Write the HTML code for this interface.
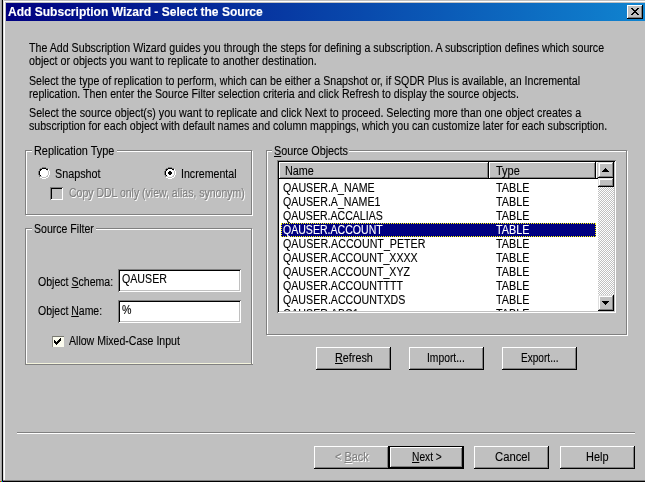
<!DOCTYPE html>
<html><head><meta charset="utf-8"><title>Add Subscription Wizard - Select the Source</title>
<style>
html,body{margin:0;padding:0;}
body{width:645px;height:482px;overflow:hidden;background:#c0c0c0;font-family:"Liberation Sans",sans-serif;font-size:12px;color:#000;position:relative;}
div,span,svg{position:absolute;box-sizing:border-box;}
.t{white-space:nowrap;line-height:13px;height:13px;transform-origin:0 0;-webkit-text-stroke:0.12px currentColor;}
.t u{position:static;text-decoration:underline;text-underline-offset:1px;text-decoration-thickness:1px}
.dis{color:#808080;text-shadow:1px 1px 0 #fff;}
.gb{background:#c0c0c0;height:13px;}
.etg{border:1px solid #808080;}
.etw{border:1px solid #fff;}
.sunk{background:#fff;box-shadow:inset 1px 1px 0 #808080,inset -1px -1px 0 #fff,inset 2px 2px 0 #000,inset -2px -2px 0 #c0c0c0;}
.btn{background:#c0c0c0;box-shadow:inset -1px -1px 0 #000,inset 1px 1px 0 #fff,inset -2px -2px 0 #808080,inset 2px 2px 0 #c0c0c0;}
.def{background:#000;}
.sbtn{background:#c0c0c0;box-shadow:inset -1px -1px 0 #000,inset 1px 1px 0 #dfdfdf,inset -2px -2px 0 #808080,inset 2px 2px 0 #fff;}
.hdr{background:#c0c0c0;box-shadow:inset -1px -1px 0 #000,inset 1px 1px 0 #fff,inset -2px -2px 0 #808080;}
.row{left:281px;width:315px;height:14px;}
.sel{background:#000080;outline:1px dotted #ffff00;outline-offset:-1px;}
.track{background-color:#fff;background-image:conic-gradient(#c0c0c0 25%,#fff 0 50%,#c0c0c0 0 75%,#fff 0);background-size:2px 2px;}
</style></head><body>

<div style="left:1px;top:0;width:1px;height:482px;background:#a0a0a0"></div>
<div style="left:2px;top:0;width:1px;height:482px;background:#000"></div>
<div style="left:3px;top:0;width:1px;height:481px;background:#dcdcdc"></div>
<div style="left:4px;top:1px;width:1px;height:479px;background:#fff"></div>
<div style="left:4px;top:1px;width:641px;height:1px;background:#fff"></div>
<div style="left:3px;top:480px;width:642px;height:1px;background:#808080"></div>
<div style="left:3px;top:481px;width:642px;height:1px;background:#000"></div>
<div style="left:0;top:481px;width:1px;height:1px;background:#f00"></div><div style="left:1px;top:481px;width:1px;height:1px;background:#0f0"></div><div style="left:2px;top:481px;width:1px;height:1px;background:#00f"></div>
<div style="left:6px;top:3px;width:639px;height:18px;background:linear-gradient(90deg,#000080 0%,#1084d0 100%)"></div>
<div class="btn" style="left:627px;top:5px;width:16px;height:14px"></div>
<svg class="px" style="left:631px;top:8px" width="8" height="7" viewBox="0 0 8 7" shape-rendering="crispEdges"><rect x="0" y="0" width="2" height="1" fill="#000"/><rect x="6" y="0" width="2" height="1" fill="#000"/><rect x="1" y="1" width="2" height="1" fill="#000"/><rect x="5" y="1" width="2" height="1" fill="#000"/><rect x="2" y="2" width="4" height="1" fill="#000"/><rect x="3" y="3" width="2" height="1" fill="#000"/><rect x="2" y="4" width="4" height="1" fill="#000"/><rect x="1" y="5" width="2" height="1" fill="#000"/><rect x="5" y="5" width="2" height="1" fill="#000"/><rect x="0" y="6" width="2" height="1" fill="#000"/><rect x="6" y="6" width="2" height="1" fill="#000"/></svg>
<div class="etw" style="left:26px;top:151px;width:227px;height:65px"></div>
<div class="etg" style="left:25px;top:150px;width:227px;height:65px"></div>
<div style="left:26px;top:229px;width:227px;height:135px;border:1px solid #fff;border-bottom-color:#f4f4dc"></div>
<div style="left:25px;top:228px;width:227px;height:136px;border:1px solid #808080;border-bottom:0"></div>
<div style="left:25px;top:364px;width:228px;height:1px;background:#808080"></div>
<div class="etw" style="left:267px;top:151px;width:361px;height:185px"></div>
<div class="etg" style="left:266px;top:150px;width:361px;height:185px"></div>
<div class="gb" style="left:32px;top:145px;width:85px"></div>
<div class="gb" style="left:32px;top:223px;width:64px"></div>
<div class="gb" style="left:272px;top:145px;width:77px"></div>
<svg class="px" style="left:38px;top:167px" width="12" height="12" viewBox="0 0 12 12" shape-rendering="crispEdges"><rect x="4" y="0" width="4" height="1" fill="#808080"/><rect x="2" y="1" width="2" height="1" fill="#808080"/><rect x="4" y="1" width="4" height="1" fill="#000"/><rect x="8" y="1" width="2" height="1" fill="#808080"/><rect x="1" y="2" width="1" height="1" fill="#808080"/><rect x="2" y="2" width="2" height="1" fill="#000"/><rect x="4" y="2" width="4" height="1" fill="#fff"/><rect x="8" y="2" width="2" height="1" fill="#000"/><rect x="10" y="2" width="1" height="1" fill="#fff"/><rect x="1" y="3" width="1" height="1" fill="#808080"/><rect x="2" y="3" width="1" height="1" fill="#000"/><rect x="3" y="3" width="6" height="1" fill="#fff"/><rect x="9" y="3" width="1" height="1" fill="#c0c0c0"/><rect x="10" y="3" width="1" height="1" fill="#fff"/><rect x="0" y="4" width="1" height="1" fill="#808080"/><rect x="1" y="4" width="1" height="1" fill="#000"/><rect x="2" y="4" width="8" height="1" fill="#fff"/><rect x="10" y="4" width="1" height="1" fill="#c0c0c0"/><rect x="11" y="4" width="1" height="1" fill="#fff"/><rect x="0" y="5" width="1" height="1" fill="#808080"/><rect x="1" y="5" width="1" height="1" fill="#000"/><rect x="2" y="5" width="8" height="1" fill="#fff"/><rect x="10" y="5" width="1" height="1" fill="#c0c0c0"/><rect x="11" y="5" width="1" height="1" fill="#fff"/><rect x="0" y="6" width="1" height="1" fill="#808080"/><rect x="1" y="6" width="1" height="1" fill="#000"/><rect x="2" y="6" width="8" height="1" fill="#fff"/><rect x="10" y="6" width="1" height="1" fill="#c0c0c0"/><rect x="11" y="6" width="1" height="1" fill="#fff"/><rect x="0" y="7" width="1" height="1" fill="#808080"/><rect x="1" y="7" width="1" height="1" fill="#000"/><rect x="2" y="7" width="8" height="1" fill="#fff"/><rect x="10" y="7" width="1" height="1" fill="#c0c0c0"/><rect x="11" y="7" width="1" height="1" fill="#fff"/><rect x="1" y="8" width="1" height="1" fill="#808080"/><rect x="2" y="8" width="1" height="1" fill="#000"/><rect x="3" y="8" width="6" height="1" fill="#fff"/><rect x="9" y="8" width="1" height="1" fill="#c0c0c0"/><rect x="10" y="8" width="1" height="1" fill="#fff"/><rect x="1" y="9" width="1" height="1" fill="#808080"/><rect x="2" y="9" width="2" height="1" fill="#c0c0c0"/><rect x="4" y="9" width="4" height="1" fill="#fff"/><rect x="8" y="9" width="2" height="1" fill="#c0c0c0"/><rect x="10" y="9" width="1" height="1" fill="#fff"/><rect x="2" y="10" width="2" height="1" fill="#fff"/><rect x="4" y="10" width="4" height="1" fill="#c0c0c0"/><rect x="8" y="10" width="2" height="1" fill="#fff"/><rect x="4" y="11" width="4" height="1" fill="#fff"/></svg>
<svg class="px" style="left:164px;top:167px" width="12" height="12" viewBox="0 0 12 12" shape-rendering="crispEdges"><rect x="4" y="0" width="4" height="1" fill="#808080"/><rect x="2" y="1" width="2" height="1" fill="#808080"/><rect x="4" y="1" width="4" height="1" fill="#000"/><rect x="8" y="1" width="2" height="1" fill="#808080"/><rect x="1" y="2" width="1" height="1" fill="#808080"/><rect x="2" y="2" width="2" height="1" fill="#000"/><rect x="4" y="2" width="4" height="1" fill="#fff"/><rect x="8" y="2" width="2" height="1" fill="#000"/><rect x="10" y="2" width="1" height="1" fill="#fff"/><rect x="1" y="3" width="1" height="1" fill="#808080"/><rect x="2" y="3" width="1" height="1" fill="#000"/><rect x="3" y="3" width="6" height="1" fill="#fff"/><rect x="9" y="3" width="1" height="1" fill="#c0c0c0"/><rect x="10" y="3" width="1" height="1" fill="#fff"/><rect x="0" y="4" width="1" height="1" fill="#808080"/><rect x="1" y="4" width="1" height="1" fill="#000"/><rect x="2" y="4" width="3" height="1" fill="#fff"/><rect x="5" y="4" width="2" height="1" fill="#000"/><rect x="7" y="4" width="3" height="1" fill="#fff"/><rect x="10" y="4" width="1" height="1" fill="#c0c0c0"/><rect x="11" y="4" width="1" height="1" fill="#fff"/><rect x="0" y="5" width="1" height="1" fill="#808080"/><rect x="1" y="5" width="1" height="1" fill="#000"/><rect x="2" y="5" width="2" height="1" fill="#fff"/><rect x="4" y="5" width="4" height="1" fill="#000"/><rect x="8" y="5" width="2" height="1" fill="#fff"/><rect x="10" y="5" width="1" height="1" fill="#c0c0c0"/><rect x="11" y="5" width="1" height="1" fill="#fff"/><rect x="0" y="6" width="1" height="1" fill="#808080"/><rect x="1" y="6" width="1" height="1" fill="#000"/><rect x="2" y="6" width="2" height="1" fill="#fff"/><rect x="4" y="6" width="4" height="1" fill="#000"/><rect x="8" y="6" width="2" height="1" fill="#fff"/><rect x="10" y="6" width="1" height="1" fill="#c0c0c0"/><rect x="11" y="6" width="1" height="1" fill="#fff"/><rect x="0" y="7" width="1" height="1" fill="#808080"/><rect x="1" y="7" width="1" height="1" fill="#000"/><rect x="2" y="7" width="3" height="1" fill="#fff"/><rect x="5" y="7" width="2" height="1" fill="#000"/><rect x="7" y="7" width="3" height="1" fill="#fff"/><rect x="10" y="7" width="1" height="1" fill="#c0c0c0"/><rect x="11" y="7" width="1" height="1" fill="#fff"/><rect x="1" y="8" width="1" height="1" fill="#808080"/><rect x="2" y="8" width="1" height="1" fill="#000"/><rect x="3" y="8" width="6" height="1" fill="#fff"/><rect x="9" y="8" width="1" height="1" fill="#c0c0c0"/><rect x="10" y="8" width="1" height="1" fill="#fff"/><rect x="1" y="9" width="1" height="1" fill="#808080"/><rect x="2" y="9" width="2" height="1" fill="#c0c0c0"/><rect x="4" y="9" width="4" height="1" fill="#fff"/><rect x="8" y="9" width="2" height="1" fill="#c0c0c0"/><rect x="10" y="9" width="1" height="1" fill="#fff"/><rect x="2" y="10" width="2" height="1" fill="#fff"/><rect x="4" y="10" width="4" height="1" fill="#c0c0c0"/><rect x="8" y="10" width="2" height="1" fill="#fff"/><rect x="4" y="11" width="4" height="1" fill="#fff"/></svg>
<div class="sunk" style="left:50px;top:187px;width:13px;height:13px;background:#c0c0c0"></div>
<div style="left:52px;top:336px;width:12px;height:11px;background:#fbfbee;border-top:1px solid #77776f;border-left:1px solid #8c8c84"></div>
<svg class="px" style="left:54px;top:338px" width="7" height="7" viewBox="0 0 7 7" shape-rendering="crispEdges"><rect x="6" y="0" width="1" height="1" fill="#000"/><rect x="5" y="1" width="2" height="1" fill="#000"/><rect x="0" y="2" width="1" height="1" fill="#000"/><rect x="4" y="2" width="3" height="1" fill="#000"/><rect x="0" y="3" width="2" height="1" fill="#000"/><rect x="3" y="3" width="3" height="1" fill="#000"/><rect x="0" y="4" width="5" height="1" fill="#000"/><rect x="1" y="5" width="3" height="1" fill="#000"/><rect x="2" y="6" width="1" height="1" fill="#000"/></svg>
<div class="sunk" style="left:118px;top:269px;width:123px;height:23px"></div>
<div class="sunk" style="left:118px;top:300px;width:123px;height:23px"></div>
<div class="sunk" style="left:277px;top:160px;width:339px;height:153px"></div>
<div class="hdr" style="left:279px;top:162px;width:210px;height:17px"></div>
<div class="hdr" style="left:489px;top:162px;width:107px;height:17px"></div>
<div class="hdr" style="left:596px;top:162px;width:4px;height:17px"></div>
<div class="track" style="left:598px;top:162px;width:16px;height:149px"></div>
<div class="sbtn" style="left:598px;top:162px;width:16px;height:16px"></div>
<svg class="px" style="left:602px;top:168px" width="7" height="4" viewBox="0 0 7 4" shape-rendering="crispEdges"><rect x="3" y="0" width="1" height="1" fill="#000"/><rect x="2" y="1" width="3" height="1" fill="#000"/><rect x="1" y="2" width="5" height="1" fill="#000"/><rect x="0" y="3" width="7" height="1" fill="#000"/></svg>
<div class="sbtn" style="left:598px;top:178px;width:16px;height:9px"></div>
<div class="sbtn" style="left:598px;top:295px;width:16px;height:16px"></div>
<svg class="px" style="left:602px;top:301px" width="7" height="4" viewBox="0 0 7 4" shape-rendering="crispEdges"><rect x="0" y="0" width="7" height="1" fill="#000"/><rect x="1" y="1" width="5" height="1" fill="#000"/><rect x="2" y="2" width="3" height="1" fill="#000"/><rect x="3" y="3" width="1" height="1" fill="#000"/></svg>
<div style="left:279px;top:179px;width:319px;height:132px;overflow:hidden">
<div class="row" style="left:2px;top:2px"></div>
<span class="t" id="rw0" style="left:4.4px;top:3px;transform:scaleX(0.8874)">QAUSER.A_NAME</span>
<span class="t" id="rt0" style="left:216.6px;top:3px;transform:scaleX(0.8973)">TABLE</span>
<div class="row" style="left:2px;top:16px"></div>
<span class="t" id="rw1" style="left:4.4px;top:17px;transform:scaleX(0.8855)">QAUSER.A_NAME1</span>
<span class="t" id="rt1" style="left:216.6px;top:17px;transform:scaleX(0.8973)">TABLE</span>
<div class="row" style="left:2px;top:30px"></div>
<span class="t" id="rw2" style="left:4.4px;top:31px;transform:scaleX(0.8796)">QAUSER.ACCALIAS</span>
<span class="t" id="rt2" style="left:216.6px;top:31px;transform:scaleX(0.8973)">TABLE</span>
<div class="row sel" style="left:2px;top:44px"></div>
<span class="t" id="rw3" style="left:4.4px;top:45px;color:#fff;transform:scaleX(0.8796)">QAUSER.ACCOUNT</span>
<span class="t" id="rt3" style="left:216.6px;top:45px;color:#fff;transform:scaleX(0.8973)">TABLE</span>
<div class="row" style="left:2px;top:58px"></div>
<span class="t" id="rw4" style="left:4.4px;top:59px;transform:scaleX(0.89)">QAUSER.ACCOUNT_PETER</span>
<span class="t" id="rt4" style="left:216.6px;top:59px;transform:scaleX(0.8973)">TABLE</span>
<div class="row" style="left:2px;top:72px"></div>
<span class="t" id="rw5" style="left:4.4px;top:73px;transform:scaleX(0.886)">QAUSER.ACCOUNT_XXXX</span>
<span class="t" id="rt5" style="left:216.6px;top:73px;transform:scaleX(0.8973)">TABLE</span>
<div class="row" style="left:2px;top:86px"></div>
<span class="t" id="rw6" style="left:4.4px;top:87px;transform:scaleX(0.886)">QAUSER.ACCOUNT_XYZ</span>
<span class="t" id="rt6" style="left:216.6px;top:87px;transform:scaleX(0.8973)">TABLE</span>
<div class="row" style="left:2px;top:100px"></div>
<span class="t" id="rw7" style="left:4.4px;top:101px;transform:scaleX(0.886)">QAUSER.ACCOUNTTTT</span>
<span class="t" id="rt7" style="left:216.6px;top:101px;transform:scaleX(0.8973)">TABLE</span>
<div class="row" style="left:2px;top:114px"></div>
<span class="t" id="rw8" style="left:4.4px;top:115px;transform:scaleX(0.886)">QAUSER.ACCOUNTXDS</span>
<span class="t" id="rt8" style="left:216.6px;top:115px;transform:scaleX(0.8973)">TABLE</span>
<div class="row" style="left:2px;top:128px"></div>
<span class="t" id="rw9" style="left:4.4px;top:129px;transform:scaleX(0.886)">QAUSER.ABC1</span>
<span class="t" id="rt9" style="left:216.6px;top:129px;transform:scaleX(0.8973)">TABLE</span>
</div>
<div class="btn" style="left:316px;top:347px;width:75px;height:23px"></div>
<div class="btn" style="left:409px;top:347px;width:75px;height:23px"></div>
<div class="btn" style="left:502px;top:347px;width:75px;height:23px"></div>
<div class="btn" style="left:314px;top:446px;width:75px;height:23px"></div>
<div class="def" style="left:389px;top:446px;width:75px;height:23px"></div><div class="btn" style="left:390px;top:447px;width:73px;height:21px"></div>
<div class="btn" style="left:474px;top:446px;width:75px;height:23px"></div>
<div class="btn" style="left:560px;top:446px;width:75px;height:23px"></div>
<div style="left:17px;top:432px;width:618px;height:1px;background:#808080"></div><div style="left:17px;top:433px;width:618px;height:1px;background:#fff"></div>
<span class="t" id="tt" style="left:8px;top:6px;font-weight:bold;color:#fff;transform:scaleX(1.0031)">Add Subscription Wizard - Select the Source</span>
<span class="t" id="l1" style="left:29px;top:42px;transform:scaleX(0.887)">The Add Subscription Wizard guides you through the steps for defining a subscription. A subscription defines which source</span>
<span class="t" id="l2" style="left:29px;top:55px;transform:scaleX(0.891)">object or objects you want to replicate to another destination.</span>
<span class="t" id="l3" style="left:29px;top:75px;transform:scaleX(0.8855)">Select the type of replication to perform, which can be either a Snapshot or, if SQDR Plus is available, an Incremental</span>
<span class="t" id="l4" style="left:29px;top:88px;transform:scaleX(0.8841)">replication. Then enter the Source Filter selection criteria and click Refresh to display the source objects.</span>
<span class="t" id="l5" style="left:29px;top:107px;transform:scaleX(0.8929)">Select the source object(s) you want to replicate and click Next to proceed. Selecting more than one object creates a</span>
<span class="t" id="l6" style="left:29px;top:120px;transform:scaleX(0.8835)">subscription for each object with default names and column mappings, which you can customize later for each subscription.</span>
<span class="t" id="g1" style="left:34px;top:145px;transform:scaleX(0.9079)">Replication Type</span>
<span class="t" id="g2" style="left:34px;top:223px;transform:scaleX(0.8794)">Source Filter</span>
<span class="t" id="g3" style="left:274px;top:145px;transform:scaleX(0.9)"><u>S</u>ource Objects</span>
<span class="t" id="r1" style="left:55px;top:168px;transform:scaleX(0.898)">Snapshot</span>
<span class="t" id="r2" style="left:181px;top:168px;transform:scaleX(0.8857)">Incremental</span>
<span class="t dis" id="c1" style="left:69px;top:187px;transform:scaleX(0.8746)">Copy DDL only (view, alias, synonym)</span>
<span class="t" id="os" style="left:38px;top:276px;transform:scaleX(0.88)">Object <u>S</u>chema:</span>
<span class="t" id="on" style="left:38px;top:305px;transform:scaleX(0.874)">Object <u>N</u>ame:</span>
<span class="t" id="e1" style="left:122px;top:273px;transform:scaleX(0.886)">QAUSER</span>
<span class="t" id="e2" style="left:122px;top:304px;transform:scaleX(0.886)">%</span>
<span class="t" id="c2" style="left:69px;top:335px;transform:scaleX(0.8794)">Allow Mixed-Case Input</span>
<span class="t" id="hn" style="left:285px;top:165px;transform:scaleX(0.9)">Name</span>
<span class="t" id="ht" style="left:496px;top:165px;transform:scaleX(0.9154)">Type</span>
<span class="t" id="b1" style="left:335px;top:352px;transform:scaleX(0.9)"><u>R</u>efresh</span>
<span class="t" id="b2" style="left:427px;top:352px;transform:scaleX(0.8591)">Import...</span>
<span class="t" id="b3" style="left:521px;top:352px;transform:scaleX(0.84)">Export...</span>
<span class="t dis" id="b4" style="left:335px;top:451px;transform:scaleX(0.9135)">&lt; <u>B</u>ack</span>
<span class="t" id="b5" style="left:412px;top:451px;transform:scaleX(0.8514)"><u>N</u>ext &gt;</span>
<span class="t" id="b6" style="left:495px;top:451px;transform:scaleX(0.9405)">Cancel</span>
<span class="t" id="b7" style="left:586px;top:451px;transform:scaleX(0.912)">Help</span>
</body></html>
